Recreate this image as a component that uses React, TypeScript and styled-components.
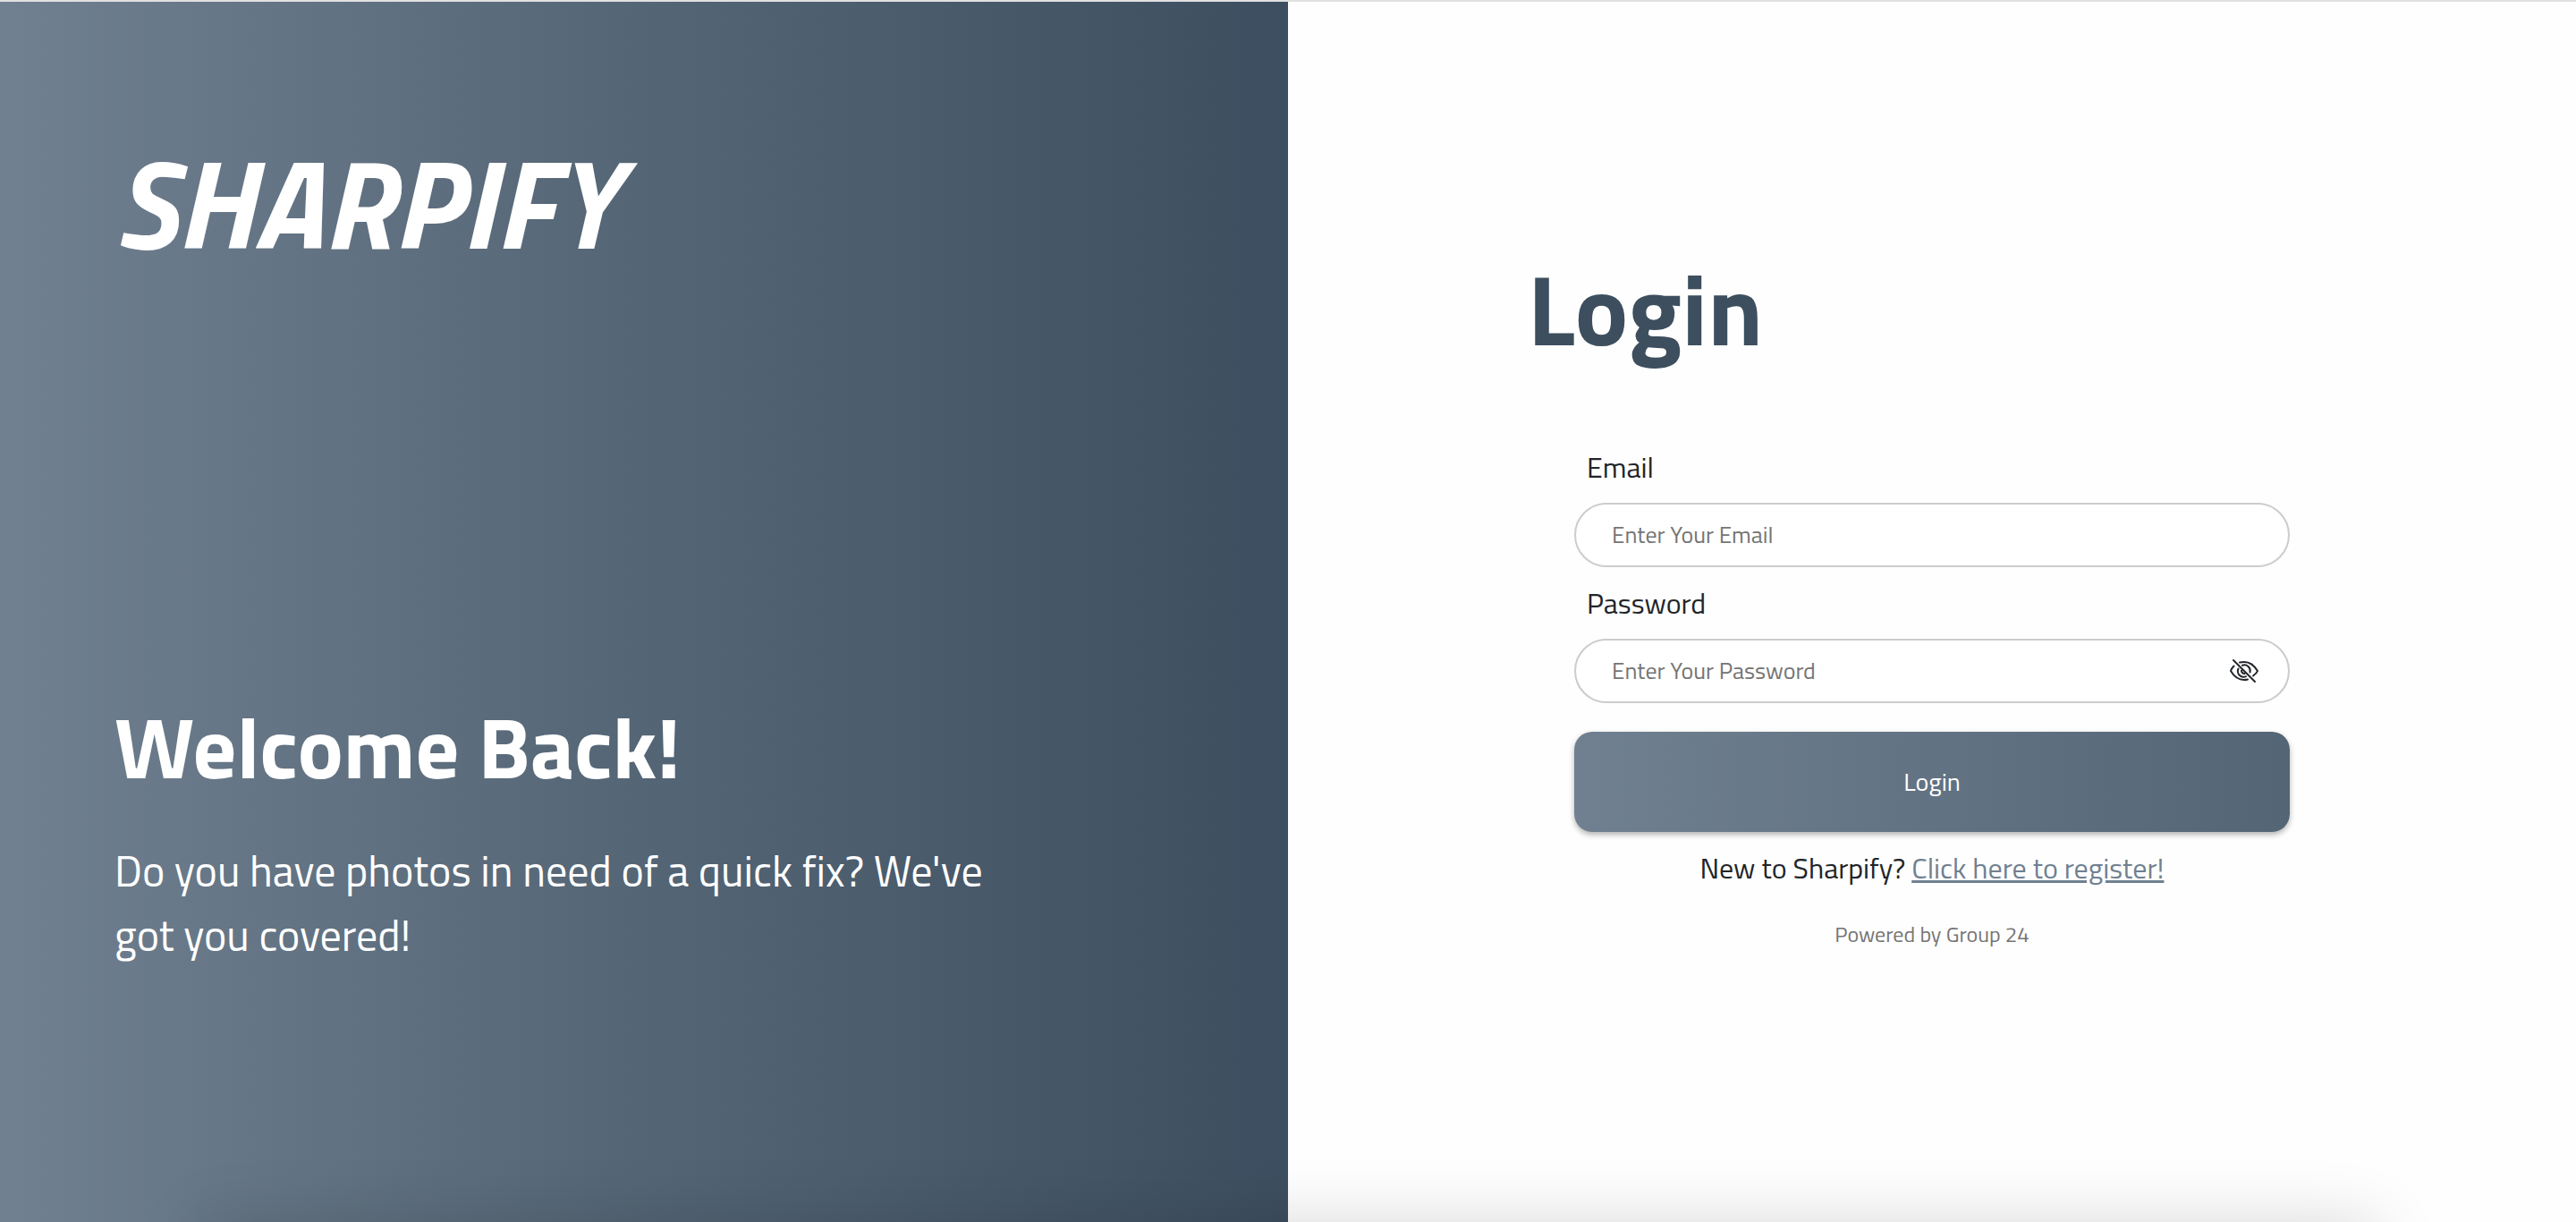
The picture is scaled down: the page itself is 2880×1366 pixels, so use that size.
import React, { useState } from "react";
import styled, { createGlobalStyle } from "styled-components";

const GlobalStyle = createGlobalStyle`
  *, *::before, *::after { box-sizing: border-box; }
  body {
    margin: 0;
    background: #fefefe;
    color: #212529;
    font-family: "Titillium Web", Roboto, "Noto Sans", sans-serif;
    font-size: 32px;
    line-height: 48px;
  }
  h1, h2, p { margin: 0; }
`;

const Page = styled.main`
  position: relative;
  display: grid;
  grid-template-columns: 1fr 1fr;
  min-height: 100vh;
  overflow: hidden;
  border-top: 2px solid #e1e1e1;

  /* soft shade rising from the bottom edge */
  &::after {
    content: "";
    position: absolute;
    top: 100%;
    left: 224px;
    right: 224px;
    height: 200px;
    box-shadow: 0 0 72px rgba(0, 0, 0, 0.15);
    pointer-events: none;
  }
`;

const Brand = styled.section`
  display: flex;
  flex-direction: column;
  justify-content: space-between;
  padding: 132px 128px 284px;
  color: #fff;
  background: linear-gradient(90deg, #708090, #546575 50%, #3d4e60);
`;

const Logo = styled.h1`
  font-size: 140px;
  font-style: italic;
  font-weight: 700;
  line-height: 184px;
`;

const Welcome = styled.div`
  display: flex;
  flex-direction: column;
  gap: 44px;
`;

const WelcomeTitle = styled.h2`
  font-size: 96px;
  font-weight: 700;
  line-height: 120px;
`;

const WelcomeText = styled.p`
  max-width: 1024px;
  font-size: 48px;
  line-height: 72px;
`;

const Panel = styled.section`
  display: flex;
  flex-direction: column;
  align-items: center;
  padding: 274px 64px 64px;
`;

const Content = styled.div`
  width: 100%;
  max-width: 904px;
`;

const Title = styled.h2`
  color: #3d4e5e;
  font-size: 112px;
  font-weight: 700;
  line-height: 136px;
`;

const Form = styled.form`
  display: flex;
  flex-direction: column;
  padding: 86px 52px 0;
`;

const Field = styled.div`
  display: flex;
  flex-direction: column;
  gap: 16px;
  margin-bottom: 16px;
`;

const Label = styled.label`
  padding-left: 14px;
`;

const InputBox = styled.div`
  display: flex;
  align-items: center;
  height: 72px;
  padding: 0 32px 0 40px;
  border: 2px solid #ccc;
  border-radius: 36px;
  background: #fff;
`;

const Input = styled.input`
  flex: 1;
  min-width: 0;
  padding: 0;
  border: 0;
  outline: 0;
  background: none;
  color: inherit;
  font: inherit;
  font-size: 26px;

  &::placeholder {
    color: #757575;
    opacity: 1;
  }
`;

const IconButton = styled.button`
  display: flex;
  padding: 0;
  border: 0;
  background: none;
  color: #212529;
  cursor: pointer;
`;

const Submit = styled.button`
  height: 112px;
  margin: 16px 0;
  border: 0;
  border-radius: 20px;
  background: linear-gradient(90deg, #708090, #546575);
  box-shadow: 0 3px 6px rgba(0, 0, 0, 0.3);
  color: #fff;
  font: inherit;
  font-size: 28px;
  cursor: pointer;
`;

const Register = styled.p`
  text-align: center;
`;

const Link = styled.a`
  color: #708090;
`;

const Credit = styled.p`
  margin-top: 26px;
  color: #757575;
  font-size: 24px;
  text-align: center;
  font-variant-numeric: lining-nums;
`;

function EyeOff() {
  return (
    <svg width="34" height="28" viewBox="0 0 34 28" fill="none" stroke="currentColor" strokeWidth="2" strokeLinecap="round" aria-hidden="true">
      <path d="M5 2 29 26" />
      <path d="M5.500 8.500Q3 11 2 14Q8 24 17 24Q19 24 21 23.500" />
      <path d="M12 4.500Q14.500 4 17 4Q26 4 32 14Q31 16.500 27 19.500" />
      <path d="M10.500 11.500A6.500 6.500 0 0 0 19 20.200" />
      <path d="M15 7.800A6.500 6.500 0 0 1 23.500 15.500" />
      <path d="M14 13.500A3.200 3.200 0 0 0 17.500 17" />
    </svg>
  );
}

export default function App() {
  const [visible, setVisible] = useState(false);

  return (
    <>
      <GlobalStyle />
      <Page>
        <Brand>
          <Logo>SHARPIFY</Logo>
          <Welcome>
            <WelcomeTitle>Welcome Back!</WelcomeTitle>
            <WelcomeText>
              Do you have photos in need of a quick fix? We've got you covered!
            </WelcomeText>
          </Welcome>
        </Brand>
        <Panel>
          <Content>
            <Title>Login</Title>
            <Form onSubmit={(e) => e.preventDefault()}>
              <Field>
                <Label htmlFor="email">Email</Label>
                <InputBox>
                  <Input id="email" type="email" placeholder="Enter Your Email" />
                </InputBox>
              </Field>
              <Field>
                <Label htmlFor="password">Password</Label>
                <InputBox>
                  <Input
                    id="password"
                    type={visible ? "text" : "password"}
                    placeholder="Enter Your Password"
                  />
                  <IconButton
                    type="button"
                    aria-label="Toggle password visibility"
                    onClick={() => setVisible(!visible)}
                  >
                    <EyeOff />
                  </IconButton>
                </InputBox>
              </Field>
              <Submit type="submit">Login</Submit>
              <Register>
                New to Sharpify? <Link href="#register">Click here to register!</Link>
              </Register>
              <Credit>Powered by Group 24</Credit>
            </Form>
          </Content>
        </Panel>
      </Page>
    </>
  );
}
